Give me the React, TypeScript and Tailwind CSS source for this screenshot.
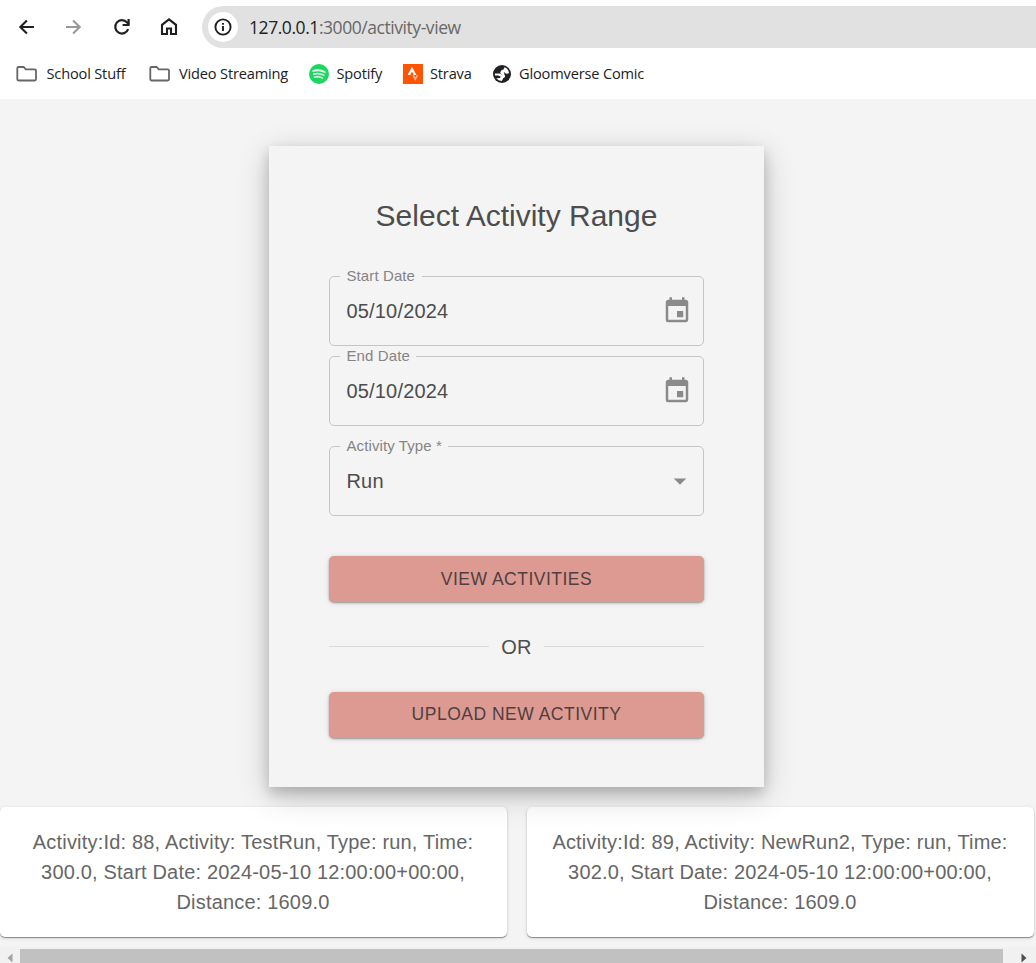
import type { ReactNode } from "react";
import { MdEvent, MdArrowDropDown } from "react-icons/md";

function ArrowIcon({ color, className = "" }: { color: string; className?: string }) {
  return (
    <svg className={className} width="20" height="20" viewBox="0 0 20 20" fill="none" stroke={color} strokeWidth="2.1">
      <path d="M18 10H5M10.9 3.4L4.3 10L10.9 16.6" />
    </svg>
  );
}

function ReloadIcon() {
  return (
    <svg width="20" height="20" viewBox="0 0 20 20" fill="none" stroke="#1f1f1f" strokeWidth="2.2">
      <path d="M16.2 12.2A6.7 6.7 0 1 1 14.9 5.3L16.6 7" />
      <path d="M16.6 2v6h-6" />
    </svg>
  );
}

function HomeIcon() {
  return (
    <svg width="20" height="20" viewBox="0 0 20 20" fill="none" stroke="#1f1f1f" strokeWidth="2.1">
      <path d="M3 17V7.8L10 2.3L17 7.8V17H12V11.5H8V17Z" />
    </svg>
  );
}

function InfoIcon() {
  return (
    <svg width="18" height="18" viewBox="0 0 18 18" fill="none" stroke="#1f1f1f" strokeWidth="1.9">
      <circle cx="9" cy="9" r="7.6" />
      <path d="M9 8v5M9 5v1.8" />
    </svg>
  );
}

function FolderIcon() {
  return (
    <svg width="22" height="18" viewBox="0 0 22 18" fill="none" stroke="#666" strokeWidth="1.8">
      <path d="M1.3 3.2Q1.3 2 2.5 2H7.6L9.8 4.4H18.7Q20 4.4 20 5.6V14.3Q20 15.5 18.8 15.5H2.5Q1.3 15.5 1.3 14.3Z" />
    </svg>
  );
}

function SpotifyIcon() {
  return (
    <svg width="20" height="20" viewBox="0 0 20 20" fill="none" strokeLinecap="round">
      <circle cx="10" cy="10" r="10" fill="#1ed760" />
      <g stroke="#e4faec">
        <path d="M4.2 6.9Q10.5 5.2 15.8 8" strokeWidth="1.9" />
        <path d="M4.7 10.1Q10 8.7 14.8 11.1" strokeWidth="1.6" />
        <path d="M5.2 13.2Q9.7 12 13.6 14.1" strokeWidth="1.3" />
      </g>
    </svg>
  );
}

function StravaIcon() {
  return (
    <svg width="20" height="20" viewBox="0 0 20 20">
      <path d="M0 0h20v20H0z" fill="#ff5500" />
      <path d="M9 2.8L13.4 11H10.8L9 7.5L7.2 11H4.6Z" fill="#fff" />
      <path d="M9.3 11.2H11.1L12.3 13.5L13.5 11.2H15.3L12.3 17Z" fill="#ffb594" />
    </svg>
  );
}

function GlobeIcon() {
  return (
    <svg width="20" height="20" viewBox="0 0 20 20">
      <circle cx="10" cy="10" r="9" fill="#202124" />
      <path
        d="M12.4 3.3Q16.3 4.7 17 8.8Q16.5 10 14.8 9.8Q13 9.6 12.4 8.2L9.8 7.8Q9 7 9.7 6.1L11.6 5.4Z"
        fill="#fff"
      />
      <path
        d="M2.9 9.6H7.4Q8.6 9.7 9.7 10.5L12.4 10.8Q13.5 11.5 13 13L11.2 14.2L9.8 16.9Q6.3 16.8 4.3 14.2L8.2 13.9L8.5 12.4L6.3 11.4H3Z"
        fill="#fff"
      />
      <path d="M9.2 6.5L12.2 8.5L12.4 11.5L9.5 10.5L8.2 8.5Z" fill="#fff" />
    </svg>
  );
}

function Bookmark({ icon, text, className }: { icon: ReactNode; text: string; className: string }) {
  return (
    <div className={`flex shrink-0 items-center ${className}`}>
      {icon}
      <span className="whitespace-nowrap">{text}</span>
    </div>
  );
}

function Field({ label, value, icon }: { label: string; value: string; icon: ReactNode }) {
  return (
    <div className="relative flex h-[70px] items-center justify-between rounded-[5px] border border-[#c5c5c5] pl-4 pr-[11px]">
      <span className="absolute -top-[10px] left-[10px] bg-[#f4f4f4] pl-[6.5px] pr-[6.5px] text-[15px] leading-[18px] tracking-[0.1px] text-[#858585]">
        {label}
      </span>
      <span className="pl-[0.5px] text-[20px] tracking-[0.17px] text-[#4d4d4d]">{value}</span>
      {icon}
    </div>
  );
}

function ActionButton({ children, className }: { children: ReactNode; className: string }) {
  return (
    <button
      className={`w-full rounded-[5px] bg-[#dd9a92] text-[17.5px] tracking-[0.5px] text-[#4f3f3e] shadow-[0_1px_2px_rgba(0,0,0,0.35),0_1px_6px_rgba(0,0,0,0.12)] ${className}`}
    >
      {children}
    </button>
  );
}

function ActivityCard({ lines }: { lines: string[] }) {
  return (
    <div className="h-[130px] w-[507px] shrink-0 rounded-[5px] bg-white pt-5 text-center text-[20px] leading-[30px] tracking-[0.19px] text-[#666] shadow-[0_1px_1px_rgba(0,0,0,0.4),0_1px_4px_rgba(0,0,0,0.12)]">
      {lines.map((line) => (
        <div key={line} className="-ml-px whitespace-nowrap">{line}</div>
      ))}
    </div>
  );
}

export default function App() {
  return (
    <div className="flex h-[963px] w-[1036px] flex-col overflow-hidden bg-[#f4f4f4] font-['Liberation_Sans',Arial,sans-serif]">
      <header className="h-[99px] shrink-0 bg-white font-['Open_Sans','Noto_Sans',sans-serif] text-[#202124]">
        <div className="flex h-[54px] items-center pl-4">
          <ArrowIcon color="#1f1f1f" />
          <ArrowIcon color="#999" className="ml-[28px] -scale-x-100" />
          <div className="ml-[28px]"><ReloadIcon /></div>
          <div className="ml-[27px]"><HomeIcon /></div>
          <div className="ml-[23px] flex h-[42px] flex-1 items-center rounded-l-full bg-[#e1e1e1] pl-[6px]">
            <div className="flex size-[30px] items-center justify-center rounded-full bg-white"><InfoIcon /></div>
            <span className="ml-[11px] pt-px text-[17.5px] tracking-[-0.44px] text-[#686868]">
              <span className="text-[#202124]">127.0.0.1</span>:3000/activity-view
            </span>
          </div>
        </div>
        <div className="flex h-[40px] items-center pl-4 text-[14.6px] tracking-[-0.17px]">
          <Bookmark className="w-[133px] gap-[8.5px]" icon={<FolderIcon />} text="School Stuff" />
          <Bookmark className="w-[160px] gap-2" icon={<FolderIcon />} text="Video Streaming" />
          <Bookmark className="w-[94px] gap-[7.5px]" icon={<SpotifyIcon />} text="Spotify" />
          <Bookmark className="w-[89px] gap-[7px]" icon={<StravaIcon />} text="Strava" />
          <Bookmark className="gap-[7px]" icon={<GlobeIcon />} text="Gloomverse Comic" />
        </div>
      </header>

      <main className="flex flex-1 flex-col pt-[47px]">
        <section className="relative z-10 ml-[269px] h-[641px] w-[495px] shrink-0 bg-[#f4f4f4] px-[60px] pt-[50px] shadow-[0_6px_12px_rgba(0,0,0,0.18),0_8px_30px_rgba(0,0,0,0.2)]">
          <h1 className="text-center text-[30px] leading-[40px] text-[#4d4d4d]">Select Activity Range</h1>
          <div className="mt-[40px] flex flex-col">
            <Field label="Start Date" value="05/10/2024" icon={<MdEvent size={30} color="#8a8a8a" />} />
            <div className="mt-[10px]">
              <Field label="End Date" value="05/10/2024" icon={<MdEvent size={30} color="#8a8a8a" />} />
            </div>
            <div className="mt-5">
              <Field label="Activity Type *" value="Run" icon={<MdArrowDropDown size={30} color="#8a8a8a" className="-mr-[3px]" />} />
            </div>
          </div>
          <div className="mt-10"><ActionButton className="h-[46px]">VIEW ACTIVITIES</ActionButton></div>
          <div className="mb-px flex h-[89px] items-center gap-3 text-[20px] tracking-[0.19px] text-[#4d4d4d]">
            <span className="h-px flex-1 bg-[#dadada]" />
            OR
            <span className="h-px flex-1 bg-[#dadada]" />
          </div>
          <ActionButton className="h-[45.5px] pb-px">UPLOAD NEW ACTIVITY</ActionButton>
        </section>

        <div className="mt-5 flex gap-5">
          <ActivityCard
            lines={["Activity:Id: 88, Activity: TestRun, Type: run, Time:", "300.0, Start Date: 2024-05-10 12:00:00+00:00,", "Distance: 1609.0"]}
          />
          <ActivityCard
            lines={["Activity:Id: 89, Activity: NewRun2, Type: run, Time:", "302.0, Start Date: 2024-05-10 12:00:00+00:00,", "Distance: 1609.0"]}
          />
        </div>
      </main>

      <div className="flex h-4 shrink-0 items-center bg-[#f1f1f1] pt-[2px]">
        <div className="flex w-5 items-center justify-center pt-[3px]">
          <svg width="6" height="10" viewBox="0 0 6 10"><path d="M5.5 0.5V9.5L0.5 5Z" fill="#a3a3a3" /></svg>
        </div>
        <div className="h-[14px] w-[983px] bg-[#c1c1c1]" />
        <div className="flex flex-1 items-center pl-[18px] pt-[3px]">
          <svg width="6" height="10" viewBox="0 0 6 10"><path d="M0.5 0.5V9.5L5.5 5Z" fill="#505050" /></svg>
        </div>
      </div>
    </div>
  );
}
